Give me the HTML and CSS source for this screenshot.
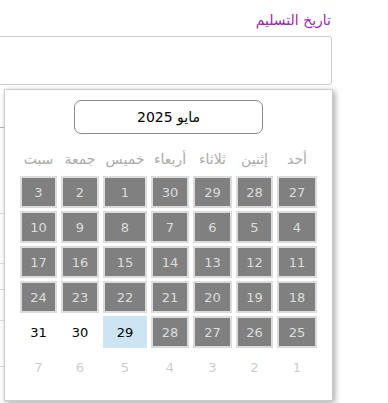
FILE: index.html
```html
<!DOCTYPE html>
<html lang="ar" dir="rtl">
<head>
    <meta charset="UTF-8">
    <meta name="viewport" content="width=device-width, initial-scale=1.0">
    <title>تاريخ التسليم</title>
    <link rel="stylesheet" href="styles.css">
</head>
<body>
    <div class="page">
        <div class="field">
            <label class="field-label" for="delivery">تاريخ التسليم</label>
            <input type="text" id="delivery" class="field-input">

            <!-- content behind the picker -->
            <div class="behind">
                <div class="row r1"></div>
                <div class="row r2"></div>
                <div class="row r3"></div>
                <div class="row r4"></div>
                <div class="row r5"></div>
            </div>

            <!-- Date picker popup -->
            <div class="picker">
                <button class="month-btn">مايو 2025</button>

                <div class="weekdays">
                    <span>أحد</span>
                    <span>إثنين</span>
                    <span>ثلاثاء</span>
                    <span>أربعاء</span>
                    <span>خميس</span>
                    <span>جمعة</span>
                    <span>سبت</span>
                </div>

                <div class="days">
                    <span class="day past">27</span>
                    <span class="day past">28</span>
                    <span class="day past">29</span>
                    <span class="day past">30</span>
                    <span class="day past">1</span>
                    <span class="day past">2</span>
                    <span class="day past">3</span>

                    <span class="day past">4</span>
                    <span class="day past">5</span>
                    <span class="day past">6</span>
                    <span class="day past">7</span>
                    <span class="day past">8</span>
                    <span class="day past">9</span>
                    <span class="day past">10</span>

                    <span class="day past">11</span>
                    <span class="day past">12</span>
                    <span class="day past">13</span>
                    <span class="day past">14</span>
                    <span class="day past">15</span>
                    <span class="day past">16</span>
                    <span class="day past">17</span>

                    <span class="day past">18</span>
                    <span class="day past">19</span>
                    <span class="day past">20</span>
                    <span class="day past">21</span>
                    <span class="day past">22</span>
                    <span class="day past">23</span>
                    <span class="day past">24</span>

                    <span class="day past">25</span>
                    <span class="day past">26</span>
                    <span class="day past">27</span>
                    <span class="day past">28</span>
                    <span class="day today">29</span>
                    <span class="day">30</span>
                    <span class="day">31</span>

                    <span class="day other">1</span>
                    <span class="day other">2</span>
                    <span class="day other">3</span>
                    <span class="day other">4</span>
                    <span class="day other">5</span>
                    <span class="day other">6</span>
                    <span class="day other">7</span>
                </div>
            </div>
        </div>
    </div>
</body>
</html>
```

FILE: styles.css
```css
body {
    margin: 0;
    padding: 0;
    background: #fff;
    font-family: 'DejaVu Sans', sans-serif;
}

.page {
    height: 403px;
    box-sizing: border-box;
    padding: 10px 56px 0 0;
    overflow: hidden;
}

.field {
    position: relative;
    margin-left: -10px;
}

.field-label {
    display: block;
    font-size: 14px;
    line-height: 20px;
    color: #9c27b0;
    margin-right: 1px;
}

.field-input {
    display: block;
    box-sizing: border-box;
    width: 100%;
    height: 49px;
    margin-top: 6px;
    border: 1px solid #ccc;
    border-radius: 3px;
    background: #fff;
}

/* rows of the form that sits under the popup */
.behind {
    margin-top: 42px;
    border-top: 1px solid #c9a3d6;
}
.behind .row {
    border-bottom: 1px solid #ddd;
}
.behind .r1 { height: 85px; }
.behind .r2 { height: 49px; }
.behind .r3 { height: 25px; }
.behind .r4 { height: 30px; }
.behind .r5 { height: 45px; }

/* Date picker */
.picker {
    position: absolute;
    top: 79px;
    right: -1px;
    width: 329px;
    height: 312px;
    box-sizing: border-box;
    padding-top: 10px;
    background: #fff;
    border: 1px solid #ccc;
    box-shadow: 2px 2px 6px rgba(0, 0, 0, 0.35);
}

.month-btn {
    display: block;
    width: 189px;
    height: 34px;
    margin: 0 auto;
    background: #fff;
    border: 1px solid #888;
    border-radius: 7px;
    font-family: 'DejaVu Sans', sans-serif;
    font-size: 14px;
    color: #000;
}

.weekdays,
.days {
    display: grid;
    grid-template-columns: 40px 37px 39px 38px 44px 38px 37px;
    column-gap: 4px;
    justify-content: center;
}

.weekdays {
    margin-top: 15px;
    height: 20px;
    line-height: 20px;
    font-size: 14px;
    color: #aaa;
    text-align: center;
    white-space: nowrap;
}

.days {
    margin-top: 7px;
    row-gap: 3px;
}

.day {
    height: 32px;
    display: flex;
    align-items: center;
    justify-content: center;
    box-sizing: border-box;
    font-size: 13px;
    color: #000;
}

.day.past {
    background: #808080;
    border: 2px solid #dcdcdc;
    color: #ddd;
}

.day.today {
    background: #cde5f3;
}

.day.other {
    color: #ccc;
}
```
